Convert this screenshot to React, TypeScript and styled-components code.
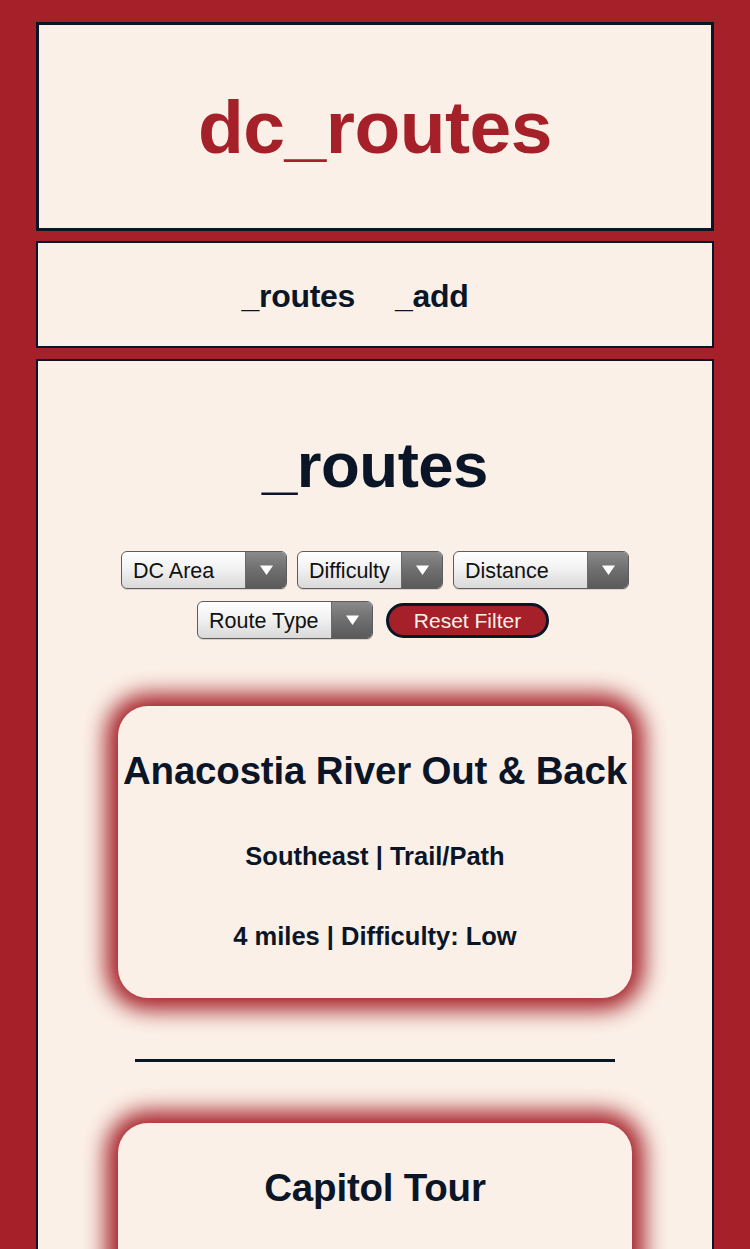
import React from "react";
import styled, { createGlobalStyle } from "styled-components";

const RED = "#a52029";
const CREAM = "#fbf0e7";
const NAVY = "#0a1628";
const FONT = `"Liberation Sans", Arial, Helvetica, sans-serif`;

const GlobalStyle = createGlobalStyle`
  html, body {
    margin: 0;
    padding: 0;
    background: ${RED};
    font-family: ${FONT};
    color: ${NAVY};
  }
  * { box-sizing: border-box; }
`;

const Page = styled.div`
  padding: 22px 36px 40px;
  display: flex;
  flex-direction: column;
`;

const Header = styled.header`
  height: 209px;
  border: 3px solid ${NAVY};
  background: ${CREAM};
  display: flex;
  align-items: center;
  justify-content: center;
`;

const SiteTitle = styled.h1`
  margin: 0;
  font-size: 75px;
  font-weight: 700;
  color: ${RED};
  letter-spacing: -0.5px;
`;

const Nav = styled.nav`
  margin-top: 10px;
  height: 107px;
  border: 2px solid ${NAVY};
  background: ${CREAM};
  display: flex;
  align-items: center;
  justify-content: center;
  padding-top: 3px;
`;

const NavLink = styled.a`
  margin-right: 40px;
  font-size: 32px;
  font-weight: 700;
  color: ${NAVY};
  text-decoration: none;
  letter-spacing: -0.3px;
`;

const Main = styled.main`
  margin-top: 11px;
  border: 2px solid ${NAVY};
  background: ${CREAM};
  display: flex;
  flex-direction: column;
  align-items: center;
  padding: 69px 0 60px;
`;

const PageHeading = styled.h2`
  margin: 0;
  font-size: 63.5px;
  line-height: 1.12;
  font-weight: 700;
  color: ${NAVY};
  letter-spacing: -0.5px;
`;

const Filters = styled.div`
  margin-top: 50px;
  display: flex;
  flex-direction: column;
  align-items: center;
  gap: 12px;
`;

const FilterRow = styled.div<{ $gap: number; $shift?: number }>`
  display: flex;
  align-items: center;
  gap: ${(p) => p.$gap}px;
  margin-right: ${(p) => p.$shift ?? 0}px;
`;

const SelectBox = styled.label<{ $w: number }>`
  width: ${(p) => p.$w}px;
  height: 38px;
  display: flex;
  border: 1px solid #5c5c5c;
  border-radius: 6px;
  overflow: hidden;
  background: linear-gradient(to bottom, #ffffff 0%, #f2f2f2 45%, #d9d9d9 100%);
  box-shadow: 0 1px 0 rgba(0, 0, 0, 0.12);
`;

const NativeSelect = styled.select`
  appearance: none;
  -webkit-appearance: none;
  flex: 1;
  min-width: 0;
  border: none;
  background: transparent;
  font-family: ${FONT};
  font-size: 21.5px;
  color: #111;
  padding: 2px 0 0 11px;
  outline: none;
`;

const ArrowPart = styled.span`
  width: 41px;
  display: flex;
  align-items: center;
  justify-content: center;
  background: linear-gradient(to bottom, #8a8a8a 0%, #6e6e6e 50%, #5a5a5a 100%);
  border-left: 1px solid #6a6a6a;
`;

const ResetButton = styled.button`
  width: 163px;
  height: 35px;
  margin-left: 3px;
  border: 3px solid ${NAVY};
  border-radius: 18px;
  background: ${RED};
  color: ${CREAM};
  font-family: ${FONT};
  font-size: 21px;
  padding: 2px 0 0;
  cursor: pointer;
`;

const RouteList = styled.div`
  margin-top: 67px;
  display: flex;
  flex-direction: column;
  align-items: center;
`;

const Card = styled.article`
  width: 514px;
  border-radius: 30px;
  background: ${CREAM};
  box-shadow: 0 0 22px 12px ${RED};
  display: flex;
  flex-direction: column;
  align-items: center;
  padding: 43px 0 47px;
  text-align: center;
`;

const CardTitle = styled.h3`
  margin: 0;
  font-size: 38.5px;
  line-height: 1.12;
  font-weight: 700;
  color: ${NAVY};
  white-space: nowrap;
  letter-spacing: -0.2px;
`;

const CardLine = styled.p`
  margin: 50px 0 0;
  font-size: 25.5px;
  line-height: 1.16;
  font-weight: 700;
  color: ${NAVY};
`;

const Divider = styled.hr`
  width: 480px;
  height: 3px;
  margin: 61px 0;
  border: none;
  background: ${NAVY};
`;

type Route = { name: string; area: string; type: string; miles: number; difficulty: string };

const routes: Route[] = [
  { name: "Anacostia River Out & Back", area: "Southeast", type: "Trail/Path", miles: 4, difficulty: "Low" },
  { name: "Capitol Tour", area: "Capitol Hill", type: "Street", miles: 3, difficulty: "Low" },
];

const Triangle = () => (
  <svg width="15" height="12" viewBox="0 0 15 12">
    <path d="M1 1.5 L14 1.5 L7.5 11 Z" fill="#ffffff" />
  </svg>
);

const Select = ({ label, w }: { label: string; w: number }) => (
  <SelectBox $w={w}>
    <NativeSelect defaultValue="">
      <option value="">{label}</option>
    </NativeSelect>
    <ArrowPart>
      <Triangle />
    </ArrowPart>
  </SelectBox>
);

export default function App() {
  return (
    <>
      <GlobalStyle />
      <Page>
        <Header>
          <SiteTitle>dc_routes</SiteTitle>
        </Header>
        <Nav>
          <NavLink href="#">_routes</NavLink>
          <NavLink href="#">_add</NavLink>
        </Nav>
        <Main>
          <PageHeading>_routes</PageHeading>
          <Filters>
            <FilterRow $gap={10}>
              <Select label="DC Area" w={166} />
              <Select label="Difficulty" w={146} />
              <Select label="Distance" w={176} />
            </FilterRow>
            <FilterRow $gap={10} $shift={4}>
              <Select label="Route Type" w={176} />
              <ResetButton>Reset Filter</ResetButton>
            </FilterRow>
          </Filters>
          <RouteList>
            {routes.map((r, i) => (
              <React.Fragment key={r.name}>
                {i > 0 && <Divider />}
                <Card>
                  <CardTitle>{r.name}</CardTitle>
                  <CardLine>
                    {r.area} | {r.type}
                  </CardLine>
                  <CardLine>
                    {r.miles} miles | Difficulty: {r.difficulty}
                  </CardLine>
                </Card>
              </React.Fragment>
            ))}
          </RouteList>
        </Main>
      </Page>
    </>
  );
}
